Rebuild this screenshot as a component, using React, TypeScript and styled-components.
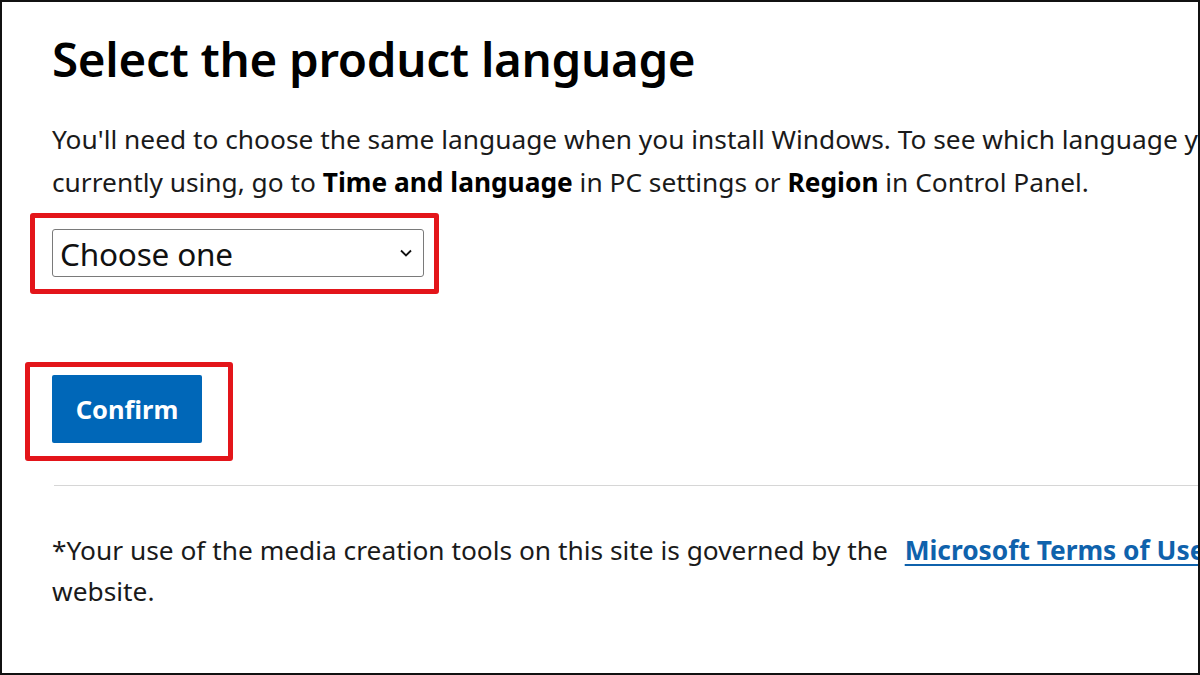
import React from 'react';
import styled, { createGlobalStyle } from 'styled-components';

const GlobalStyle = createGlobalStyle`
  html, body {
    margin: 0;
    padding: 0;
    background: #fff;
  }
  body {
    font-family: "Noto Sans", "Open Sans", sans-serif;
    color: #000;
    overflow: hidden;
  }
`;

const Frame = styled.div`
  width: 1200px;
  height: 675px;
  box-sizing: border-box;
  border: 2px solid #111;
  overflow: hidden;
  background: #fff;
`;

const Content = styled.div`
  width: 1400px;
  padding: 25px 0 0 50px;
  box-sizing: border-box;
`;

const Heading = styled.h1`
  margin: 0;
  font-size: 47.5px;
  font-weight: 600;
  line-height: 64px;
  letter-spacing: -0.3px;
  white-space: nowrap;
`;

const Text = styled.p`
  margin: 0;
  font-size: 26.3px;
  line-height: 43px;
  color: #1a1a1a;
  white-space: nowrap;
`;

const Intro = styled(Text)`
  margin-top: 27px;
`;

const Strong = styled.b`
  font-weight: 700;
  color: #000;
`;

const Field = styled.div`
  position: relative;
  margin-top: 25px;
  width: 372px;
`;

const Highlight = styled.div<{ $top: number; $left: number; $right: number; $bottom: number }>`
  position: absolute;
  top: ${(p) => p.$top}px;
  left: ${(p) => p.$left}px;
  right: ${(p) => p.$right}px;
  bottom: ${(p) => p.$bottom}px;
  border: 5px solid #e3151a;
  border-radius: 3px;
  pointer-events: none;
`;

const Select = styled.div`
  height: 48px;
  box-sizing: border-box;
  border: 1px solid #7a7a7a;
  border-radius: 3px;
  display: flex;
  align-items: center;
  justify-content: space-between;
  padding: 0 8px 0 7px;
  font-size: 31.5px;
  color: #111;
  letter-spacing: -0.2px;
`;

const Chevron = styled.svg`
  width: 14px;
  height: 10px;
  margin-right: 2px;
`;

const ButtonWrap = styled.div`
  position: relative;
  margin-top: 98px;
  width: 150px;
`;

const Button = styled.button`
  width: 150px;
  height: 68px;
  border: none;
  border-radius: 2px;
  background: #0067b8;
  color: #fff;
  font-family: inherit;
  font-size: 25.5px;
  font-weight: 700;
  padding: 0;
`;

const Divider = styled.hr`
  margin: 42px 0 0 2px;
  border: none;
  border-top: 1px solid #d6d6d6;
`;

const Footer = styled(Text)`
  margin-top: 44px;
  line-height: 41px;
`;

const Link = styled.a`
  color: #0f62ac;
  font-weight: 700;
  text-decoration: underline;
  text-underline-offset: 4px;
  text-decoration-thickness: 2px;
  margin-left: 10px;
`;

export default function App() {
  return (
    <>
      <GlobalStyle />
      <Frame>
        <Content>
          <Heading>Select the product language</Heading>
          <Intro>
            You'll need to choose the same language when you install Windows. To see which language you're
            <br />
            currently using, go to <Strong>Time and language</Strong> in PC settings or <Strong>Region</Strong> in
            Control Panel.
          </Intro>
          <Field>
            <Select>
              <span>Choose one</span>
              <Chevron viewBox="0 0 14 10">
                <path d="M2 2.5 L7 7.5 L12 2.5" fill="none" stroke="#111" strokeWidth="1.8" />
              </Chevron>
            </Select>
            <Highlight $top={-16} $left={-22} $right={-15} $bottom={-17} />
          </Field>
          <ButtonWrap>
            <Button type="button">Confirm</Button>
            <Highlight $top={-13} $left={-27} $right={-31} $bottom={-18} />
          </ButtonWrap>
          <Divider />
          <Footer>
            *Your use of the media creation tools on this site is governed by the{' '}
            <Link href="#">Microsoft Terms of Use</Link>
            <br />
            website.
          </Footer>
        </Content>
      </Frame>
    </>
  );
}
